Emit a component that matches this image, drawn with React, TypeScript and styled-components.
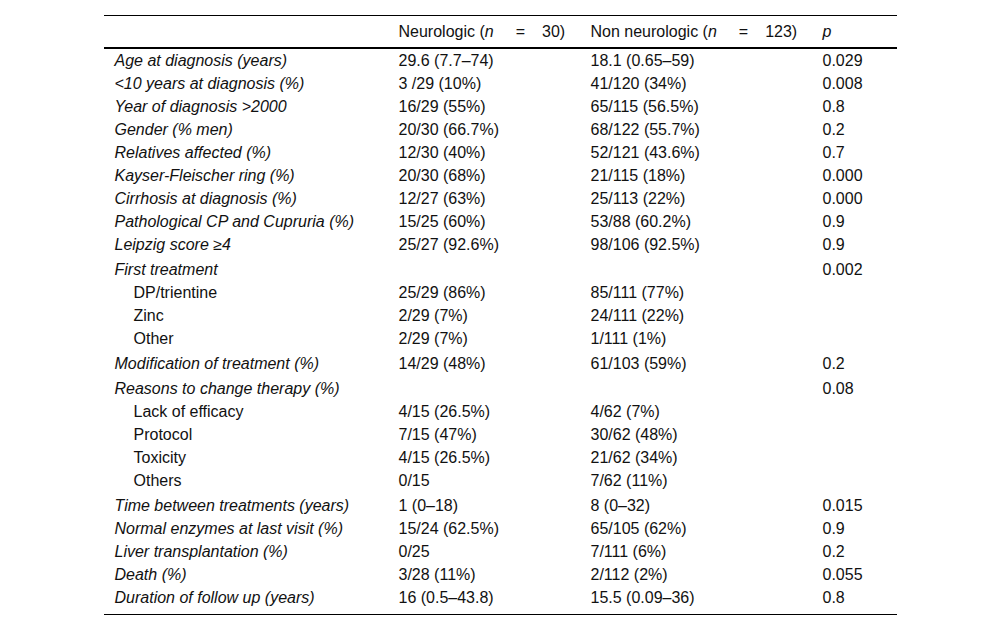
import React from 'react';
import styled, { createGlobalStyle } from 'styled-components';

type Line = { label: string; neuro?: string; non?: string; p?: string; sub?: boolean };
type Block = Line[];

const blocks: Block[] = [
  [{ label: 'Age at diagnosis (years)', neuro: '29.6 (7.7–74)', non: '18.1 (0.65–59)', p: '0.029' }],
  [{ label: '<10 years at diagnosis (%)', neuro: '3 /29 (10%)', non: '41/120 (34%)', p: '0.008' }],
  [{ label: 'Year of diagnosis >2000', neuro: '16/29 (55%)', non: '65/115 (56.5%)', p: '0.8' }],
  [{ label: 'Gender (% men)', neuro: '20/30 (66.7%)', non: '68/122 (55.7%)', p: '0.2' }],
  [{ label: 'Relatives affected (%)', neuro: '12/30 (40%)', non: '52/121 (43.6%)', p: '0.7' }],
  [{ label: 'Kayser-Fleischer ring (%)', neuro: '20/30 (68%)', non: '21/115 (18%)', p: '0.000' }],
  [{ label: 'Cirrhosis at diagnosis (%)', neuro: '12/27 (63%)', non: '25/113 (22%)', p: '0.000' }],
  [{ label: 'Pathological CP and Cupruria (%)', neuro: '15/25 (60%)', non: '53/88 (60.2%)', p: '0.9' }],
  [{ label: 'Leipzig score ≥4', neuro: '25/27 (92.6%)', non: '98/106 (92.5%)', p: '0.9' }],
  [
    { label: 'First treatment', p: '0.002' },
    { label: 'DP/trientine', neuro: '25/29 (86%)', non: '85/111 (77%)', sub: true },
    { label: 'Zinc', neuro: '2/29 (7%)', non: '24/111 (22%)', sub: true },
    { label: 'Other', neuro: '2/29 (7%)', non: '1/111 (1%)', sub: true },
  ],
  [{ label: 'Modification of treatment (%)', neuro: '14/29 (48%)', non: '61/103 (59%)', p: '0.2' }],
  [
    { label: 'Reasons to change therapy (%)', p: '0.08' },
    { label: 'Lack of efficacy', neuro: '4/15 (26.5%)', non: '4/62 (7%)', sub: true },
    { label: 'Protocol', neuro: '7/15 (47%)', non: '30/62 (48%)', sub: true },
    { label: 'Toxicity', neuro: '4/15 (26.5%)', non: '21/62 (34%)', sub: true },
    { label: 'Others', neuro: '0/15', non: '7/62 (11%)', sub: true },
  ],
  [{ label: 'Time between treatments (years)', neuro: '1 (0–18)', non: '8 (0–32)', p: '0.015' }],
  [{ label: 'Normal enzymes at last visit (%)', neuro: '15/24 (62.5%)', non: '65/105 (62%)', p: '0.9' }],
  [{ label: 'Liver transplantation (%)', neuro: '0/25', non: '7/111 (6%)', p: '0.2' }],
  [{ label: 'Death (%)', neuro: '3/28 (11%)', non: '2/112 (2%)', p: '0.055' }],
  [{ label: 'Duration of follow up (years)', neuro: '16 (0.5–43.8)', non: '15.5 (0.09–36)', p: '0.8' }],
];

const App = () => {
  return (
    <>
      <GlobalStyle />
      <Table>
        <Head>
          <Cell />
          <Cell>
            Neurologic (<I>n</I>
            <Eq>=</Eq>30)
          </Cell>
          <Cell>
            Non neurologic (<I>n</I>
            <Eq>=</Eq>123)
          </Cell>
          <Cell>
            <I>p</I>
          </Cell>
        </Head>
        <Body>
          {blocks.map((block, i) => (
            <Group key={i} $padded={block.length > 1}>
              {block.map((line) => (
                <Row key={line.label}>
                  <Label $sub={!!line.sub}>{line.label}</Label>
                  <Cell>{line.neuro}</Cell>
                  <Cell>{line.non}</Cell>
                  <Cell>{line.p}</Cell>
                </Row>
              ))}
            </Group>
          ))}
        </Body>
      </Table>
    </>
  );
};

const GlobalStyle = createGlobalStyle`
  body {
    margin: 0;
    background: #fff;
    font-family: "Liberation Sans", Arial, sans-serif;
    color: #111;
  }
`;

const Table = styled.div`
  width: 793px;
  margin: 15px auto 0;
  border-top: 1px solid #000;
  border-bottom: 1px solid #000;
  font-size: 16px;
`;

const Head = styled.div`
  display: grid;
  grid-template-columns: 284px 192px 232px 1fr;
  align-items: center;
  height: 31px;
  border-bottom: 2px solid #000;
`;

const Body = styled.div`
  padding-bottom: 5px;
`;

const Group = styled.div<{ $padded: boolean }>`
  padding: ${(p) => (p.$padded ? '2px 0' : '0')};
`;

const Row = styled.div`
  display: grid;
  grid-template-columns: 284px 192px 232px 1fr;
  height: 23px;
  line-height: 23px;
`;

const Cell = styled.div`
  padding-left: 11px;
  white-space: nowrap;
`;

const Label = styled(Cell)<{ $sub: boolean }>`
  padding-left: ${(p) => (p.$sub ? '30px' : '11px')};
  font-style: ${(p) => (p.$sub ? 'normal' : 'italic')};
`;

const I = styled.i`
  font-style: italic;
`;

const Eq = styled.span`
  margin: 0 17px 0 22px;
`;

export default App;
